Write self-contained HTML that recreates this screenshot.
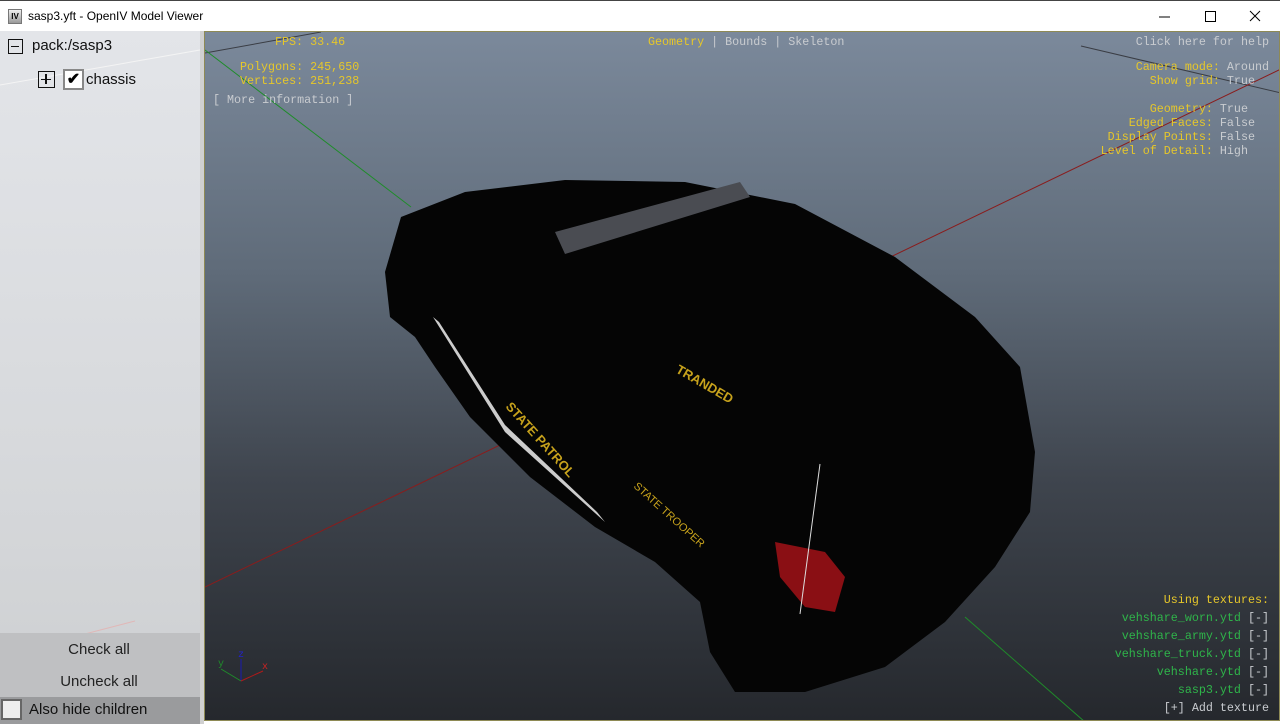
<!DOCTYPE html>
<html><head><meta charset="utf-8"><style>
*{margin:0;padding:0;box-sizing:border-box}
body{width:1280px;height:724px;overflow:hidden;background:#fff;font-family:"Liberation Sans",sans-serif;position:relative}
#title{position:absolute;left:0;top:0;width:1280px;height:31px;background:#fff;border-top:1px solid #444}
#title .t{position:absolute;left:28px;top:8px;font-size:12px;color:#000}
#title .ic{position:absolute;left:8px;top:8px;width:14px;height:15px;background:linear-gradient(#eee,#999);border:1px solid #777;font-size:8px;font-weight:bold;text-align:center;line-height:13px}
#vp{position:absolute;left:204px;top:31px;width:1076px;height:690px;background:linear-gradient(#7b899b 0%,#5f6b79 35%,#3f454e 65%,#25282d 100%);border:1px solid #8e8a55;overflow:hidden}
#left{position:absolute;left:0;top:31px;width:200px;height:693px;background:linear-gradient(#e3e5e9,#d7d9dc 60%,#cdcfd1)}
#div{position:absolute;left:200px;top:31px;width:4px;height:693px;background:#d0d0d0}
.m{font-family:"Liberation Mono",monospace;font-size:11.7px;position:absolute;white-space:pre;line-height:14px}
.y{color:#e6c72a}.w{color:#c9ccd0}.g{color:#2fb54a}
.r{text-align:right}
</style></head><body>
<div id="title"><div class="ic">IV</div><div class="t">sasp3.yft - OpenIV Model Viewer</div>
<svg style="position:absolute;left:1150px;top:6px" width="120" height="20"><line x1="9" y1="10" x2="20" y2="10" stroke="#000"/><rect x="55.5" y="4.5" width="10" height="10" fill="none" stroke="#000"/><path d="M100 4l10 10M110 4l-10 10" stroke="#000"/></svg></div>
<div id="left">
<svg style="position:absolute;left:0;top:0" width="200" height="693"><line x1="0" y1="54" x2="200" y2="19" stroke="#f4f4f4"/><line x1="0" y1="625" x2="135" y2="590" stroke="#e0b8b8"/></svg>
<div style="position:absolute;left:8px;top:8px;width:15px;height:15px;border:1.5px solid #111"><div style="position:absolute;left:2px;top:5.5px;width:8px;height:1.5px;background:#111"></div></div>
<div style="position:absolute;left:32px;top:6px;font-size:15px;color:#111">pack:/sasp3</div>
<div style="position:absolute;left:38px;top:40px;width:17px;height:17px;border:1.5px solid #111"><div style="position:absolute;left:2px;top:6.5px;width:10px;height:1.5px;background:#111"></div><div style="position:absolute;left:6.3px;top:2px;width:1.5px;height:10px;background:#111"></div></div>
<div style="position:absolute;left:63px;top:38px;width:21px;height:21px;border:2px solid #888;background:#fff;font-size:16px;line-height:17px;text-align:center;font-weight:bold">✔</div>
<div style="position:absolute;left:86px;top:40px;font-size:15px;color:#111">chassis</div>
<div style="position:absolute;left:0;top:602px;width:200px;height:64px;background:#bfc0c2"></div>
<div style="position:absolute;left:0;top:610px;width:198px;text-align:center;font-size:15px;color:#222">Check all</div>
<div style="position:absolute;left:0;top:642px;width:198px;text-align:center;font-size:15px;color:#222">Uncheck all</div>
<div style="position:absolute;left:0;top:666px;width:200px;height:27px;background:#9a9b9d"></div>
<div style="position:absolute;left:1px;top:668px;width:21px;height:21px;border:2px solid #666;background:#eee"></div>
<div style="position:absolute;left:29px;top:670px;font-size:15px;color:#111">Also hide children</div>
</div>
<div id="div"></div>
<div id="vp">
<svg style="position:absolute;left:0;top:0" width="1076" height="690">
<line x1="0" y1="21" x2="116" y2="0" stroke="#3a3d44"/>
<line x1="876" y1="14" x2="1076" y2="61" stroke="#3a3d44"/>
<line x1="0" y1="18" x2="206" y2="175" stroke="#1f8c2a"/>
<line x1="0" y1="555" x2="1076" y2="37" stroke="#8a1c1c"/>
<line x1="760" y1="585" x2="880" y2="690" stroke="#1f8c2a"/>
<path d="M180 240 L196 185 L260 160 L360 148 L480 150 L590 172 L690 225 L770 285 L815 335 L830 420 L825 480 L790 535 L740 590 L680 635 L600 660 L530 660 L505 620 L495 570 L450 530 L390 495 L325 445 L265 385 L230 335 L210 305 L185 285 Z" fill="#050505"/>
<path d="M350 200 L535 150 L545 165 L360 222 Z" fill="#4a4c52"/>
<path d="M228 285 L300 400 L400 490 L392 480 L300 393 L234 290Z" fill="#ccc"/>
<text x="470" y="340" fill="#c7a21c" font-size="13" font-weight="bold" transform="rotate(30 470 340)" font-family="Liberation Sans">TRANDED</text>
<text x="300" y="375" fill="#c7a21c" font-size="13" font-weight="bold" transform="rotate(48 300 375)" font-family="Liberation Sans">STATE PATROL</text>
<text x="428" y="455" fill="#c7a21c" font-size="11" transform="rotate(42 428 455)" font-family="Liberation Sans">STATE TROOPER</text>
<path d="M570 510 L620 520 L640 545 L630 580 L600 575 L575 545Z" fill="#8a0f14"/>
<line x1="615" y1="432" x2="595" y2="582" stroke="#ddd"/>
<g transform="translate(12,647)"><line x1="24" y1="2" x2="24" y2="-20" stroke="#1a1ab0"/><line x1="24" y1="2" x2="4" y2="-10" stroke="#1f8c2a"/><line x1="24" y1="2" x2="46" y2="-8" stroke="#b01a1a"/>
<text x="21" y="-22" fill="#2222cc" font-size="10" font-family="Liberation Mono">z</text><text x="1" y="-13" fill="#1f8c2a" font-size="10" font-family="Liberation Mono">y</text><text x="45" y="-10" fill="#c22" font-size="10" font-family="Liberation Mono">x</text></g>
</svg>
<div class="m y" style="left:70px;top:3px">FPS: 33.46</div>
<div class="m y" style="left:35px;top:28px">Polygons: 245,650
Vertices: 251,238</div>
<div class="m w" style="left:8px;top:61px">[ More information ]</div>
<div class="m" style="left:443px;top:3px"><span class="y">Geometry</span><span class="w"> | Bounds | Skeleton</span></div>
<div class="m w r" style="right:10px;top:3px">Click here for help</div>
<div class="m r" style="right:10px;top:28px"><span class="y">Camera mode:</span><span class="w"> Around</span>
<span class="y">Show grid:</span><span class="w"> True  </span>

<span class="y">Geometry:</span><span class="w"> True   </span>
<span class="y">Edged Faces:</span><span class="w"> False  </span>
<span class="y">Display Points:</span><span class="w"> False  </span>
<span class="y">Level of Detail:</span><span class="w"> High   </span></div>
<div class="m r" style="right:10px;top:559px;line-height:18px"><span class="y">Using textures:</span>
<span class="g">vehshare_worn.ytd</span><span class="w"> [-]</span>
<span class="g">vehshare_army.ytd</span><span class="w"> [-]</span>
<span class="g">vehshare_truck.ytd</span><span class="w"> [-]</span>
<span class="g">vehshare.ytd</span><span class="w"> [-]</span>
<span class="g">sasp3.ytd</span><span class="w"> [-]</span>
<span class="w">[+] Add texture</span></div>
</div>
</body></html>
